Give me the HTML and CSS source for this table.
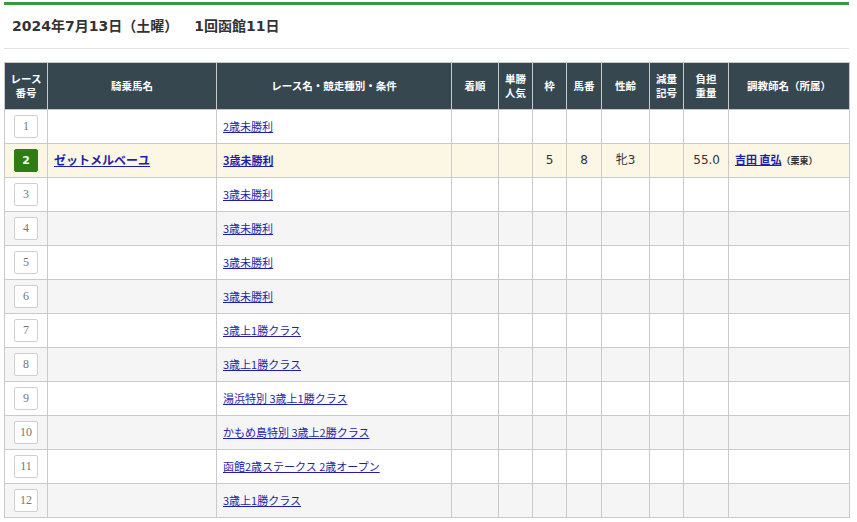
FILE: index.html
```html
<!DOCTYPE html>
<html lang="ja">
<head>
<meta charset="utf-8">
<title>レース一覧</title>
<link rel="stylesheet" href="styles.css">
</head>
<body>
<div class="page">
  <div class="topbar"></div>
  <h2 class="title"><span>2024年7月13日（土曜）</span><span class="kai">1回函館11日</span></h2>
  <table class="races">
    <colgroup>
      <col style="width:43px"><col style="width:169px"><col style="width:235px"><col style="width:47px"><col style="width:34px"><col style="width:34px"><col style="width:35px"><col style="width:48px"><col style="width:34px"><col style="width:45px"><col style="width:121px">
    </colgroup>
    <thead>
      <tr>
        <th>レース<br>番号</th>
        <th>騎乗馬名</th>
        <th>レース名・競走種別・条件</th>
        <th>着順</th>
        <th>単勝<br>人気</th>
        <th>枠</th>
        <th>馬番</th>
        <th>性齢</th>
        <th>減量<br>記号</th>
        <th>負担<br>重量</th>
        <th>調教師名（所属）</th>
      </tr>
    </thead>
    <tbody>
      <tr><td class="no"><span class="num">1</span></td><td></td><td class="race"><a href="#">2歳未勝利</a></td><td></td><td></td><td></td><td></td><td></td><td></td><td></td><td></td></tr>
      <tr class="ride"><td class="no"><span class="num on">2</span></td><td class="horse"><a href="#">ゼットメルベーユ</a></td><td class="race"><a href="#">3歳未勝利</a></td><td></td><td></td><td class="c">5</td><td class="c">8</td><td class="c">牝3</td><td></td><td class="r">55.0</td><td class="trainer"><a href="#">吉田 直弘</a><span class="aff">（栗東）</span></td></tr>
      <tr><td class="no"><span class="num">3</span></td><td></td><td class="race"><a href="#">3歳未勝利</a></td><td></td><td></td><td></td><td></td><td></td><td></td><td></td><td></td></tr>
      <tr class="alt"><td class="no"><span class="num">4</span></td><td></td><td class="race"><a href="#">3歳未勝利</a></td><td></td><td></td><td></td><td></td><td></td><td></td><td></td><td></td></tr>
      <tr><td class="no"><span class="num">5</span></td><td></td><td class="race"><a href="#">3歳未勝利</a></td><td></td><td></td><td></td><td></td><td></td><td></td><td></td><td></td></tr>
      <tr class="alt"><td class="no"><span class="num">6</span></td><td></td><td class="race"><a href="#">3歳未勝利</a></td><td></td><td></td><td></td><td></td><td></td><td></td><td></td><td></td></tr>
      <tr><td class="no"><span class="num">7</span></td><td></td><td class="race"><a href="#">3歳上1勝クラス</a></td><td></td><td></td><td></td><td></td><td></td><td></td><td></td><td></td></tr>
      <tr class="alt"><td class="no"><span class="num">8</span></td><td></td><td class="race"><a href="#">3歳上1勝クラス</a></td><td></td><td></td><td></td><td></td><td></td><td></td><td></td><td></td></tr>
      <tr><td class="no"><span class="num">9</span></td><td></td><td class="race"><a href="#">湯浜特別 3歳上1勝クラス</a></td><td></td><td></td><td></td><td></td><td></td><td></td><td></td><td></td></tr>
      <tr class="alt"><td class="no"><span class="num">10</span></td><td></td><td class="race"><a href="#">かもめ島特別 3歳上2勝クラス</a></td><td></td><td></td><td></td><td></td><td></td><td></td><td></td><td></td></tr>
      <tr><td class="no"><span class="num">11</span></td><td></td><td class="race"><a href="#">函館2歳ステークス 2歳オープン</a></td><td></td><td></td><td></td><td></td><td></td><td></td><td></td><td></td></tr>
      <tr class="alt"><td class="no"><span class="num">12</span></td><td></td><td class="race"><a href="#">3歳上1勝クラス</a></td><td></td><td></td><td></td><td></td><td></td><td></td><td></td><td></td></tr>
    </tbody>
  </table>
</div>
</body>
</html>
```

FILE: styles.css
```css
html, body {
  margin: 0;
  padding: 0;
  background: #fff;
}
body {
  font-family: "Noto Sans CJK JP", "Noto Sans", sans-serif;
  color: #333;
}
.page {
  width: 845px;
  padding: 2px 0 0 4px;
}
.topbar {
  height: 3px;
  background: #3b9a3e;
}
.title {
  margin: 0;
  padding: 10px 0 11px 8px;
  font-family: "DejaVu Sans", "Noto Sans CJK JP", sans-serif;
  font-size: 14px;
  line-height: 22px;
  font-weight: bold;
  color: #333;
  border-bottom: 1px solid #e3e3e3;
}
.title .kai {
  margin-left: 16px;
}
.races {
  margin-top: 13px;
  width: 845px;
  table-layout: fixed;
  border-collapse: collapse;
  font-size: 11px;
}
.races th {
  background: #37474f;
  color: #fff;
  font-size: 10.5px;
  font-weight: bold;
  line-height: 14px;
  height: 46px;
  padding: 0;
  border: 1px solid #c9c9c9;
  text-align: center;
  vertical-align: middle;
}
.races td {
  height: 31px;
  padding: 0 6px 2px;
  border: 1px solid #cacaca;
  vertical-align: middle;
  line-height: 14px;
  white-space: nowrap;
}
.races tr.alt td {
  background: #f5f5f5;
}
.races tr.ride td {
  background: #fcf6e4;
  font-size: 12px;
}
.races td.no {
  padding: 0;
  text-align: center;
}
.num {
  display: inline-block;
  box-sizing: border-box;
  width: 24px;
  height: 23px;
  line-height: 21px;
  border: 1px solid #cfcfcf;
  border-radius: 2px;
  background: #fff;
  color: #777;
  font-family: "Liberation Serif", "DejaVu Serif", serif;
  font-size: 12px;
  font-weight: normal;
  vertical-align: middle;
}
.num.on {
  background: #2e7d12;
  border-color: #2e7d12;
  color: #fff;
  font-family: "DejaVu Sans", sans-serif;
  font-weight: bold;
  font-size: 11px;
}
.races a {
  color: #1f1fae;
  text-decoration: underline;
}
.races td.race a {
  font-size: 11px;
}
.races tr.ride a {
  font-weight: bold;
}
.races td.c,
.races td.r {
  font-family: "DejaVu Sans", "Noto Sans CJK JP", sans-serif;
  font-size: 11.5px;
  color: #333;
}
.races td.c {
  text-align: center;
  padding: 0 0 2px;
}
.races td.r {
  text-align: right;
  padding-right: 8px;
}
.races td.trainer a {
  font-size: 11px;
}
.aff {
  font-size: 9px;
  font-weight: bold;
  color: #333;
}
```
